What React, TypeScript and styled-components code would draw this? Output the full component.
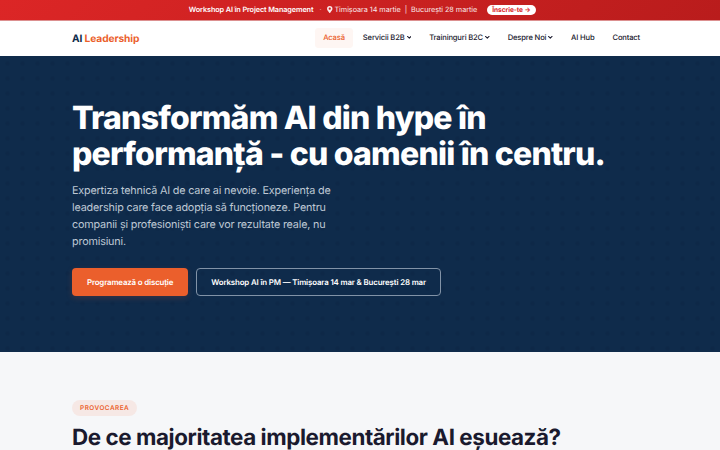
import styled, { createGlobalStyle } from "styled-components";

const colors = {
  navy: "#0f2b4b",
  orange: "#eb5f2c",
  ink: "#1a1a2e",
  light: "#f6f7f9",
};

const navItems = [
  { label: "Acasă", active: true },
  { label: "Servicii B2B", menu: true },
  { label: "Traininguri B2C", menu: true },
  { label: "Despre Noi", menu: true },
  { label: "AI Hub" },
  { label: "Contact" },
];

export default function App() {
  return (
    <>
      <GlobalStyle />
      <PromoBar>
        <strong>Workshop AI în Project Management</strong>
        <PromoDot>·</PromoDot>
        <PromoPlace>
          <PinIcon />
          Timișoara 14 martie &nbsp;|&nbsp; București 28 martie
        </PromoPlace>
        <PromoLink href="#">Înscrie-te →</PromoLink>
      </PromoBar>
      <Header>
        <Logo>
          AI <span>Leadership</span>
        </Logo>
        <Nav>
          {navItems.map((item) => (
            <NavLink key={item.label} href="#" $active={item.active}>
              {item.label}
              {item.menu && <Chevron />}
            </NavLink>
          ))}
        </Nav>
      </Header>
      <Hero>
        <HeroTitle>
          Transformăm AI din hype în
          <br />
          performanță - cu oamenii în centru.
        </HeroTitle>
        <HeroText>
          Expertiza tehnică AI de care ai nevoie. Experiența de
          <br />
          leadership care face adopția să funcționeze. Pentru
          <br />
          companii și profesioniști care vor rezultate reale, nu
          <br />
          promisiuni.
        </HeroText>
        <Actions>
          <ButtonPrimary>Programează o discuție</ButtonPrimary>
          <ButtonOutline>
            Workshop AI în PM — Timișoara 14 mar &amp; București 28 mar
          </ButtonOutline>
        </Actions>
      </Hero>
      <Section>
        <Badge>PROVOCAREA</Badge>
        <SectionTitle>De ce majoritatea implementărilor AI eșuează?</SectionTitle>
      </Section>
    </>
  );
}

function PinIcon() {
  return (
    <svg width="5.5" height="7.2" viewBox="0 0 384 512" fill="currentColor">
      <path d="M172 502C27 291 0 270 0 192a192 192 0 0 1 384 0c0 78-27 99-172 310a24 24 0 0 1-40 0zM192 272a80 80 0 1 0 0-160 80 80 0 0 0 0 160z" />
    </svg>
  );
}

function Chevron() {
  return (
    <svg width="4.6" height="4.6" viewBox="0 0 10 10" fill="none">
      <path
        d="M1.2 3.2 5 7l3.8-3.8"
        stroke="currentColor"
        strokeWidth="2.2"
        strokeLinecap="round"
        strokeLinejoin="round"
      />
    </svg>
  );
}

const GlobalStyle = createGlobalStyle`
  * {
    box-sizing: border-box;
  }
  body {
    margin: 0;
    height: 450px;
    overflow: hidden;
    font-family: Inter, sans-serif;
    text-rendering: geometricPrecision;
    background: ${colors.light};
    color: ${colors.ink};
  }
  #root {
    white-space: nowrap;
  }
`;

const PromoBar = styled.div`
  height: 20px;
  padding: 0 0 1px 4.5px;
  display: flex;
  align-items: center;
  justify-content: center;
  background: linear-gradient(135deg, #dc2626, #b91c1c);
  color: white;
  font-size: 7.3px;
  line-height: 12px;
  letter-spacing: -0.06px;

  strong {
    font-weight: 600;
    letter-spacing: -0.12px;
  }
`;

const PromoDot = styled.span`
  margin: 0 6px;
  opacity: 0.5;
`;

const PromoPlace = styled.span`
  display: flex;
  align-items: center;
  gap: 1.5px;
  opacity: 0.9;
`;

const PromoLink = styled.a`
  height: 10px;
  margin-left: 10px;
  padding: 0 5px;
  border-radius: 5px;
  background: white;
  color: #dc2626;
  font-size: 6.6px;
  font-weight: 700;
  line-height: 10px;
  text-decoration: none;
`;

const Header = styled.header`
  height: 36px;
  padding: 0 72px 1px;
  display: flex;
  align-items: center;
  justify-content: space-between;
  border-top: 1px solid #dc9090;
  background: white;
`;

const Logo = styled.div`
  padding-top: 1px;
  font-size: 10.2px;
  font-weight: 700;
  letter-spacing: -0.1px;
  color: ${colors.navy};

  span {
    color: ${colors.orange};
  }
`;

const Nav = styled.nav`
  display: flex;
  gap: 2px;
`;

const NavLink = styled.a<{ $active?: boolean }>`
  height: 20px;
  padding: 0 8px 1px;
  display: flex;
  align-items: center;
  gap: 2.1px;
  border-radius: 3.4px;
  background: ${(p) => (p.$active ? "#fef6f3" : "transparent")};
  color: ${(p) => (p.$active ? colors.orange : colors.ink)};
  font-size: 7.6px;
  font-weight: 500;
  letter-spacing: -0.16px;
  text-decoration: none;
`;

const Hero = styled.section`
  height: 296px;
  padding: 44px 72px 0;
  background-color: ${colors.navy};
  background-image: radial-gradient(
    ellipse at center,
    rgba(0, 10, 35, 0.09) 0 1px,
    transparent 3px
  );
  background-size: 15px 15px;
`;

const HeroTitle = styled.h1`
  margin: 0;
  color: white;
  font-size: 32px;
  font-weight: 800;
  line-height: 36px;
  letter-spacing: -0.79px;
`;

const HeroText = styled.p`
  margin: 9.5px 0 0;
  color: #bec8d4;
  font-size: 10.8px;
  line-height: 17.28px;
  letter-spacing: -0.18px;
`;

const Actions = styled.div`
  display: flex;
  gap: 8px;
  margin-top: 17.5px;
`;

const ButtonPrimary = styled.button`
  height: 28px;
  padding: 0 15px;
  border: 0;
  border-radius: 4px;
  background: ${colors.orange};
  color: white;
  box-shadow: 0 2px 6px rgba(235, 95, 44, 0.18);
  font-family: inherit;
  font-size: 7.9px;
  font-weight: 600;
  letter-spacing: -0.16px;
  text-rendering: inherit;
`;

const ButtonOutline = styled(ButtonPrimary)`
  padding: 0 14px;
  border: 1px solid #8293a7;
  background: transparent;
  box-shadow: none;
`;

const Section = styled.section`
  height: 98px;
  padding: 48px 72px 0;
  overflow: hidden;
  background: ${colors.light};
`;

const Badge = styled.div`
  width: fit-content;
  height: 16px;
  padding: 0 8px;
  border-radius: 8px;
  background: #f6e8e5;
  color: ${colors.orange};
  font-size: 6.4px;
  font-weight: 600;
  line-height: 16px;
  letter-spacing: 0.08em;
`;

const SectionTitle = styled.h2`
  margin: 7px 0 0;
  font-size: 22.4px;
  font-weight: 700;
  line-height: 30px;
  letter-spacing: -0.43px;
`;
